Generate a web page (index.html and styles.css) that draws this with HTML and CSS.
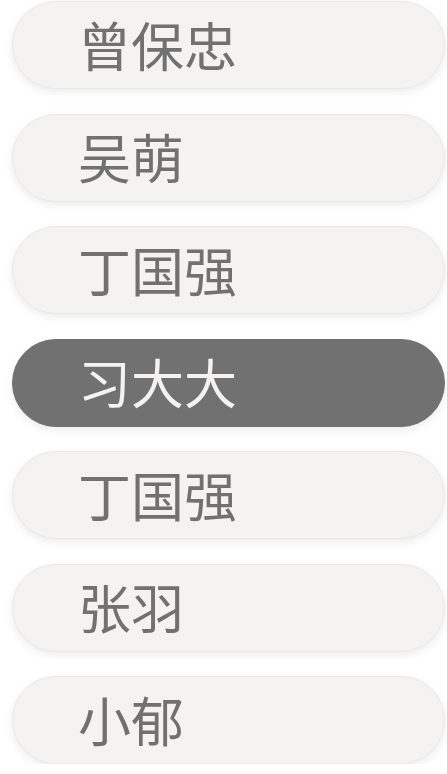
FILE: index.html
```html
<!DOCTYPE html>
<html lang="zh">
<head>
<meta charset="utf-8">
<link rel="stylesheet" href="styles.css">
</head>
<body>
<ul class="list">
  <li class="item">曾保忠</li>
  <li class="item">吴萌</li>
  <li class="item">丁国强</li>
  <li class="item active">习大大</li>
  <li class="item">丁国强</li>
  <li class="item">张羽</li>
  <li class="item">小郁</li>
</ul>
</body>
</html>
```
FILE: styles.css
```css
html, body {
  margin: 0;
  padding: 0;
  background: #ffffff;
}
.list {
  list-style: none;
  margin: 0;
  padding: 1px 0 0 12px;
  display: flex;
  flex-direction: column;
  gap: 24.5px;
}
.item {
  box-sizing: border-box;
  width: 433px;
  height: 88px;
  border-radius: 44px;
  background: #f4f3f1;
  border: 1px solid #ebe9e4;
  box-shadow: 0 3px 8px rgba(0, 0, 0, 0.08);
  display: flex;
  align-items: center;
  padding-left: 65px;
  padding-bottom: 3px;
  font-family: "Noto Sans CJK SC", "Noto Sans", sans-serif;
  font-size: 53px;
  font-weight: 400;
  color: #717171;
  letter-spacing: 0px;
}
.item.active {
  background: #717171;
  border-color: #717171;
  color: #f4f3f1;
}
```
